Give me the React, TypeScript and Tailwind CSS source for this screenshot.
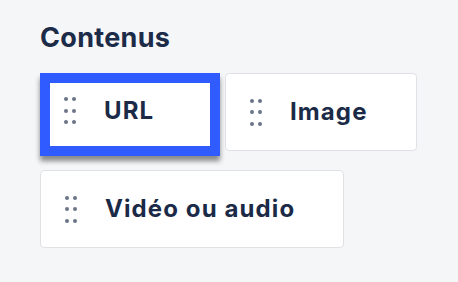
const items = ['URL', 'Image', 'Vidéo ou audio']

const Grip = () => (
  <div className="grid grid-cols-2 gap-x-[4px] gap-y-[7.5px] w-[12px] shrink-0">
    {Array.from({ length: 6 }).map((_, i) => (
      <span key={i} className="block w-[4px] h-[4px] rounded-full bg-[#6b7489]" />
    ))}
  </div>
)

export default function App() {
  return (
    <div
      className="w-[458px] h-[282px] bg-[#f5f6f8] pl-[40px] pt-[21px]"
      style={{ fontFamily: 'Inter, "Noto Sans", sans-serif' }}
    >
      <h2 className="text-[27px] leading-[34px] font-bold tracking-[0.3px] text-[#1c2b48]">Contenus</h2>

      <div className="mt-[18px] flex flex-wrap gap-x-[5px] gap-y-[14px] w-[410px]">
        {/* élément en cours de déplacement */}
        <div className="w-[180px] h-[83px] border-[10px] border-[#2f5bff] bg-white shadow-[0_5px_5px_rgba(0,0,0,0.45)] flex items-start pt-[14px] pl-[14px] gap-[28px]">
          <Grip />
          <span className="text-[24px] leading-[28px] font-bold tracking-[1.1px] text-[#1b2a47]">{items[0]}</span>
        </div>

        {items.slice(1).map((label) => (
          <div
            key={label}
            className="h-[78px] bg-white border border-[#dfe1e5] rounded-[4px] flex items-center pl-[24px] pr-[48px] gap-[28px]"
          >
            <Grip />
            <span className="text-[24px] leading-[28px] font-bold tracking-[1.1px] text-[#1b2a47]">{label}</span>
          </div>
        ))}
      </div>
    </div>
  )
}
